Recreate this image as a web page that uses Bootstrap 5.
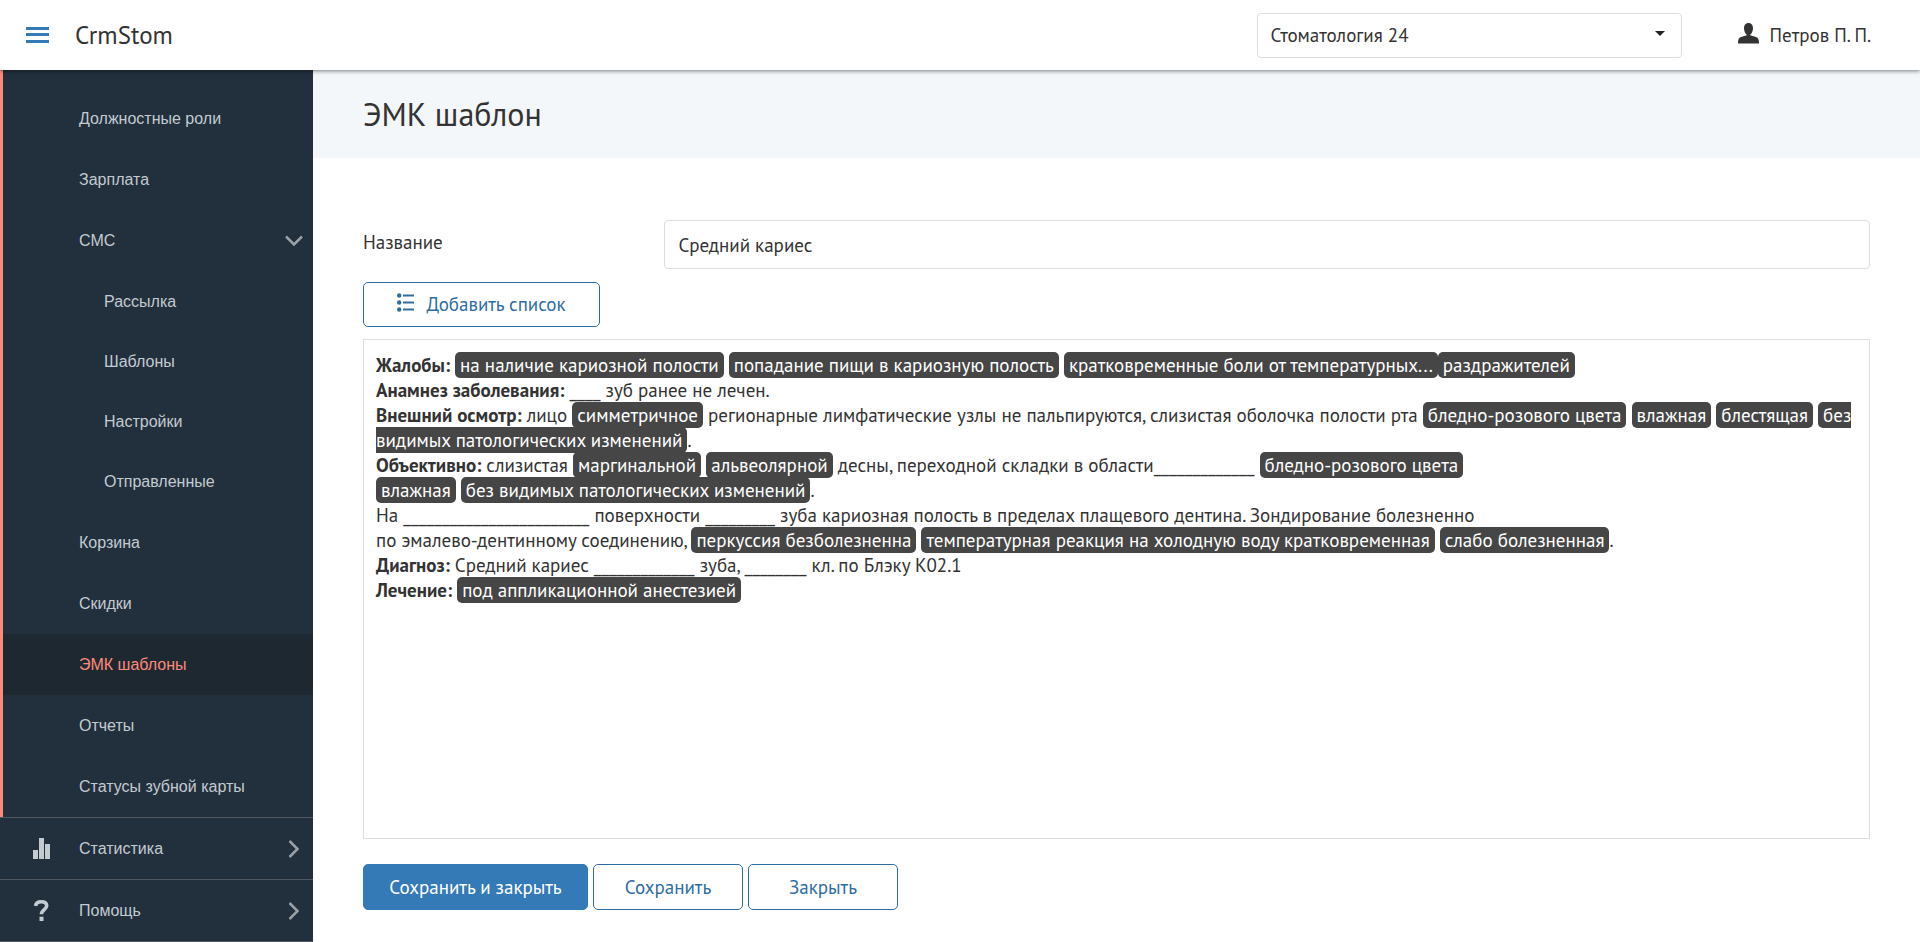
<!DOCTYPE html>
<html lang="ru">
<head>
<meta charset="utf-8">
<meta name="viewport" content="width=device-width, initial-scale=1">
<title>CrmStom</title>
<link href="https://cdn.jsdelivr.net/npm/bootstrap@5.3.0/dist/css/bootstrap.min.css" rel="stylesheet">
<style>
:root { --ink: #333; --blue: #337ab7; --blue-dark: #2e6da4; --side: #222f3d; --coral: #ff8a7a; --rule: #ddd; }
body { font-family: "PT Sans", Lato, "Noto Sans", sans-serif; font-size: 19px; line-height: 25px; color: var(--ink); }
.topbar { height: 70px; box-shadow: 0 1px 4px rgba(0,0,0,.5); position: relative; z-index: 2; padding: 0 49px 0 26px; }
.brand { font-size: 25px; color: var(--ink); margin-left: 25px; }
.clinic { width: 425px; height: 45px; font-size: 19px; color: var(--ink); border-color: var(--rule); border-radius: 4px; padding: 0 40px 0 12px;
  background-image: url("data:image/svg+xml,%3Csvg xmlns='http://www.w3.org/2000/svg' viewBox='0 0 10 8'%3E%3Cpath d='M0 0h10L5 5z' fill='%23222'/%3E%3C/svg%3E"); background-size: 10px 8px; background-position: right 16px center; }
.user-link { color: var(--ink); margin-left: 56px; gap: 10px; }
.sidebar { width: 313px; font: 16px/20px "Liberation Sans", Arial, sans-serif; background: var(--side); flex: none; }
.sidebar a { color: #c3cbd1; text-decoration: none; display: flex; align-items: center; height: 61px; padding: 0 10px 0 76px; }
.section-open { border-left: 3px solid var(--coral); padding-top: 18px; }
.submenu { padding-top: 1px; }
.sidebar .submenu a { height: 60px; padding-left: 101px; }
.section-open a.current { background: #1e2831; color: var(--coral); }
.section-closed { border-top: 1px solid #50575f; }
.sidebar .section-closed a { padding: 0 13px 0 30px; }
.section-closed .side-icon { width: 22px; margin-right: 27px; flex: none; }
.section-last { border-bottom: 1px solid #50575f; }
.title-band { background: #f3f7fa; padding: 24px 50px; }
.title-band h1 { font-size: 32px; line-height: 40px; font-weight: 400; margin: 0; }
.page-form { padding: 62px 50px 31px; }
.name-label { width: 20%; flex: none; padding-top: 10px; }
.name-input { height: 49px; font-size: 19px; color: var(--ink); border-color: var(--rule); border-radius: 4px; padding: 0 13px; }
.act { --bs-btn-font-size: 19px; --bs-btn-line-height: 25px; --bs-btn-border-radius: 5px; --bs-btn-color: var(--blue-dark); --bs-btn-border-color: var(--blue-dark); --bs-btn-bg: #fff; height: 46px; min-width: 150px; }
.act-main { --bs-btn-color: #fff; --bs-btn-bg: var(--blue); --bs-btn-border-color: var(--blue); min-width: 225px; }
.act-list { min-width: 237px; height: 45px; margin: 13px 0 12px; gap: 12px; }
.actions { gap: 5px; margin-top: 25px; }
.editor { border: 1px solid var(--rule); min-height: 500px; padding: 13px 12px; }
.tag { background: #464646; color: #fff; border-radius: 5px; padding: 1px 5px; }
</style>
</head>
<body>
<header class="topbar bg-white d-flex align-items-center">
  <button type="button" class="btn p-0 border-0 lh-1" aria-label="Меню"><svg width="24" height="18" viewBox="0 0 24 18" fill="#337ab7"><path d="M0 0h23v3H0zM0 6h23v3H0zM0 13h23v3H0z"/></svg></button>
  <a href="#" class="brand text-decoration-none">CrmStom</a>
  <select class="form-select clinic ms-auto" aria-label="Клиника"><option>Стоматология 24</option></select>
  <a href="#" class="user-link d-flex align-items-center text-decoration-none">
    <svg class="mb-1" width="21" height="21" viewBox="0 0 21 21" fill="#333"><path d="M10.500 0C13.500 0 15 2.400 15 5.300c0 2.900-1.400 5.600-2.800 6.400v.6L18 14c2.200.8 3 2.400 3 6v.500H0V20c0-3.600.8-5.200 3-6l5.800-1.700v-.6C7.400 10.900 6 8.200 6 5.300 6 2.400 7.500 0 10.500 0z"/></svg>
    <span>Петров П. П.</span>
  </a>
</header>
<div class="d-flex align-items-start">
  <nav class="sidebar" aria-label="Разделы">
    <div class="section-open">
      <a href="#">Должностные роли</a>
      <a href="#">Зарплата</a>
      <a href="#">СМС <svg class="ms-auto" width="18" height="12" viewBox="0 0 18 12" fill="none" stroke="#9aa0a6" stroke-width="2.500"><path d="M1 1.500l8 8 8-8"/></svg></a>
      <div class="submenu">
        <a href="#">Рассылка</a>
        <a href="#">Шаблоны</a>
        <a href="#">Настройки</a>
        <a href="#">Отправленные</a>
      </div>
      <a href="#">Корзина</a>
      <a href="#">Скидки</a>
      <a href="#" class="current" aria-current="page">ЭМК шаблоны</a>
      <a href="#">Отчеты</a>
      <a href="#">Статусы зубной карты</a>
    </div>
    <div class="section-closed">
      <a href="#"><svg class="side-icon" width="22" height="22" viewBox="0 0 22 22" fill="#c3cbd1"><path d="M3 12h5v9H3zM9 0h5v21H9zM15 6h5v15h-5z"/></svg>Статистика
        <svg class="ms-auto" width="12" height="18" viewBox="0 0 12 18" fill="none" stroke="#9aa0a6" stroke-width="2.500"><path d="M1.500 1l8 8-8 8"/></svg></a>
    </div>
    <div class="section-closed section-last">
      <a href="#"><svg class="side-icon" width="22" height="22" viewBox="0 0 22 22"><path d="M5.600 6C5.900 3 8 1.800 11.200 1.800c3.200 0 5.500 1.200 5.500 4 0 3.800-5.300 3.800-5.300 8.400" fill="none" stroke="#c3cbd1" stroke-width="3.600"/><path d="M9.500 16.700h4V21h-4z" fill="#c3cbd1"/></svg>Помощь
        <svg class="ms-auto" width="12" height="18" viewBox="0 0 12 18" fill="none" stroke="#9aa0a6" stroke-width="2.500"><path d="M1.500 1l8 8-8 8"/></svg></a>
    </div>
  </nav>
  <main class="flex-grow-1">
    <div class="title-band"><h1>ЭМК шаблон</h1></div>
    <form class="page-form">
      <div class="d-flex">
        <label class="name-label" for="tplName">Название</label>
        <input type="text" class="form-control name-input" id="tplName" value="Средний кариес">
      </div>
      <button type="button" class="btn act act-list d-flex align-items-center justify-content-center">
        <svg width="17" height="19" viewBox="0 0 17 19" fill="#2e6da4" class="mb-1"><circle cx="2.200" cy="2.500" r="2.200"/><circle cx="2.200" cy="9.500" r="2.200"/><circle cx="2.200" cy="16.500" r="2.200"/><path d="M6 1.500h11v2H6zM6 8.500h11v2H6zM6 15.500h11v2H6z"/></svg>
        Добавить список
      </button>
      <div class="editor" contenteditable="true" role="textbox" aria-multiline="true" aria-label="Текст шаблона" spellcheck="false"><b>Жалобы:</b> <span class="tag">на наличие кариозной полости</span> <span class="tag">попадание пищи в кариозную полость</span> <span class="tag">кратковременные боли от температурных...</span><span class="tag">раздражителей</span><br>
<b>Анамнез заболевания:</b> ____ зуб ранее не лечен.<br>
<b>Внешний осмотр:</b> лицо <span class="tag">симметричное</span> регионарные лимфатические узлы не пальпируются, слизистая оболочка полости рта <span class="tag">бледно-розового цвета</span> <span class="tag">влажная</span> <span class="tag">блестящая</span> <span class="tag">без видимых патологических изменений</span>.<br>
<b>Объективно:</b> слизистая <span class="tag">маргинальной</span> <span class="tag">альвеолярной</span> десны, переходной складки в области_____________ <span class="tag">бледно-розового цвета</span><br>
<span class="tag">влажная</span> <span class="tag">без видимых патологических изменений</span>.<br>
На ________________________ поверхности _________ зуба кариозная полость в пределах плащевого дентина. Зондирование болезненно<br>
по эмалево-дентинному соединению, <span class="tag">перкуссия безболезненна</span> <span class="tag">температурная реакция на холодную воду кратковременная</span> <span class="tag">слабо болезненная</span>.<br>
<b>Диагноз:</b> Средний кариес _____________ зуба, ________ кл. по Блэку К02.1<br>
<b>Лечение:</b> <span class="tag">под аппликационной анестезией</span></div>
      <div class="actions d-flex">
        <button type="submit" class="btn act act-main">Сохранить и закрыть</button>
        <button type="button" class="btn act">Сохранить</button>
        <button type="button" class="btn act">Закрыть</button>
      </div>
    </form>
  </main>
</div>
<script src="https://cdn.jsdelivr.net/npm/bootstrap@5.3.0/dist/js/bootstrap.bundle.min.js"></script>
</body>
</html>
